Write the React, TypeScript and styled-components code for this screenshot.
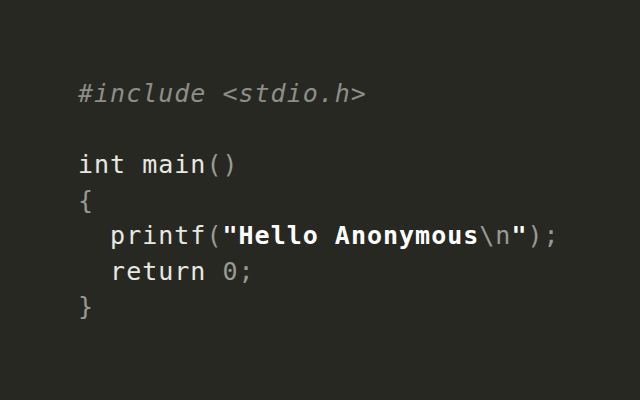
import React from "react";
import styled, { createGlobalStyle } from "styled-components";

const Global = createGlobalStyle`
  html, body { margin: 0; padding: 0; background: #282823; }
  body { width: 640px; height: 400px; overflow: hidden; }
`;

const Screen = styled.div`
  width: 640px;
  height: 400px;
  background: #282823;
  box-sizing: border-box;
  padding: 76px 0 0 78px;
`;

const Code = styled.pre`
  margin: 0;
  font-family: "DejaVu Sans Mono", "Liberation Mono", monospace;
  font-size: 25px;
  line-height: 35.5px;
  color: #e8e8e2;
  letter-spacing: 1px;
`;

const Line = styled.div`
  height: 35.5px;
  white-space: pre;
`;

const Comment = styled.span`
  color: #8e8e88;
  font-style: italic;
`;

const Punct = styled.span`
  color: #9a9a94;
`;

const Str = styled.span`
  color: #ffffff;
  font-weight: 700;
`;

export default function App() {
  return (
    <>
      <Global />
      <Screen>
        <Code>
          <Line>
            <Comment>#include &lt;stdio.h&gt;</Comment>
          </Line>
          <Line> </Line>
          <Line>
            int main<Punct>()</Punct>
          </Line>
          <Line>
            <Punct>{"{"}</Punct>
          </Line>
          <Line>
            {"  "}printf<Punct>(</Punct>
            <Str>"Hello Anonymous</Str>
            <Punct>\n</Punct>
            <Str>"</Str>
            <Punct>);</Punct>
          </Line>
          <Line>
            {"  "}return <Punct>0;</Punct>
          </Line>
          <Line>
            <Punct>{"}"}</Punct>
          </Line>
        </Code>
      </Screen>
    </>
  );
}
